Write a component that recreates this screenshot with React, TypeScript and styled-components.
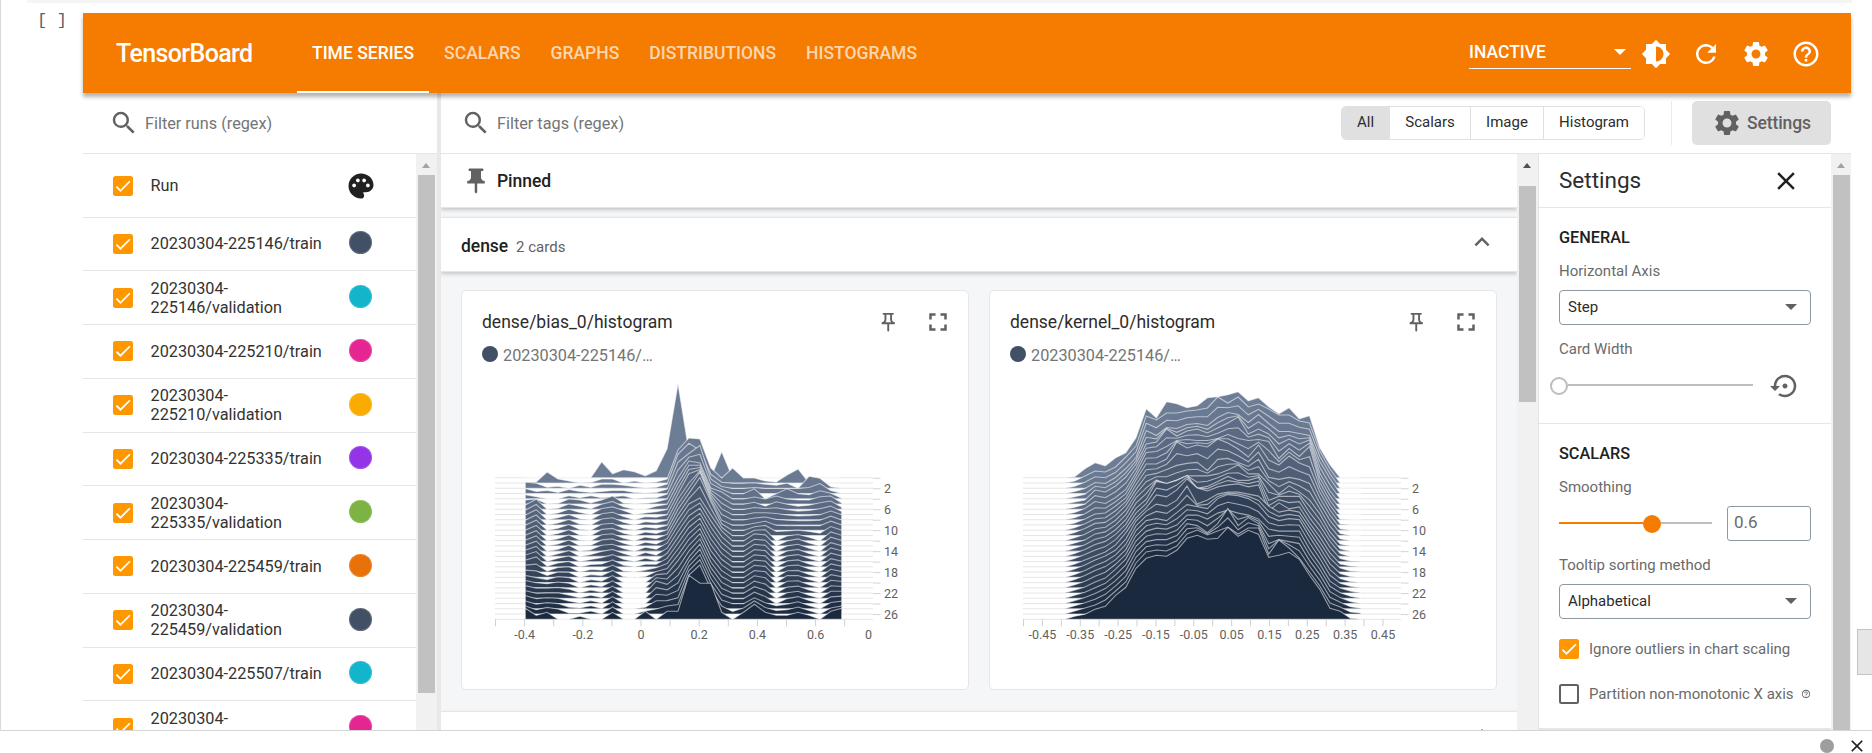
import React from "react";
import styled, { createGlobalStyle } from "styled-components";
import {
  MdBrightness6,
  MdClose,
  MdExpandLess,
  MdFullscreen,
  MdHelpOutline,
  MdOutlinePushPin,
  MdPalette,
  MdPushPin,
  MdRefresh,
  MdSearch,
  MdSettings,
  MdSettingsBackupRestore,
} from "react-icons/md";

const GlobalStyle = createGlobalStyle`
  * { box-sizing: border-box; }
  body { margin: 0; background: #fff; font-family: Roboto, "Liberation Sans", sans-serif; color: #212121; }
  svg { display: block; flex: none; }
`;

/* ---------- notebook frame ---------- */

const Page = styled.div`
  width: 1872px;
  height: 753px;
  display: flex;
  flex-direction: column;
  overflow: hidden;
  background: #fff;
`;

const Cell = styled.div`
  position: relative;
  flex: none;
  height: 731px;
  display: flex;
  flex-direction: column;
  overflow: hidden;
  border-left: 1px solid #dadada;
  border-bottom: 1px solid #d5d5d5;
`;

const PreviousCell = styled.div`
  flex: none;
  height: 3px;
  margin: 0 20px 0 26px;
  background: #f5f5f5;
`;

const CellRow = styled.div`
  flex: 1;
  min-height: 0;
  display: flex;
`;

const Gutter = styled.div`
  width: 82px;
  padding: 8px 0 0 36px;
  font: 17px/20px "Liberation Mono", monospace;
  letter-spacing: -0.3px;
  color: #616161;
  white-space: pre;
`;

const Board = styled.div`
  width: 1768px;
  padding-top: 10px;
  display: flex;
  flex-direction: column;
`;

const OuterThumb = styled.div`
  position: absolute;
  right: 0;
  top: 629px;
  width: 15px;
  height: 46px;
  background: #e6e6e6;
  border: 1px solid #c4c4c4;
  border-right: 0;
`;

const Footer = styled.div`
  flex: none;
  display: flex;
  align-items: center;
  justify-content: flex-end;
  height: 30px;
  padding-right: 5px;
`;

const StatusDot = styled.span`
  width: 14px;
  height: 14px;
  margin-right: 13px;
  border-radius: 50%;
  background: #9e9e9e;
`;

/* ---------- header ---------- */

const Header = styled.header`
  position: relative;
  z-index: 2;
  flex: none;
  height: 80px;
  display: flex;
  align-items: center;
  padding: 0 30px 0 33px;
  background: #f57c00;
  color: #fff;
  box-shadow: 0 4px 4px rgba(0, 0, 0, 0.3);
`;

const Brand = styled.h1`
  width: 181px;
  margin: 0;
  font-size: 25px;
  font-weight: 500;
  letter-spacing: -0.63px;
`;

const Tabs = styled.nav`
  display: flex;
  height: 80px;
`;

const Tab = styled.a<{ $active?: boolean }>`
  display: flex;
  align-items: center;
  padding: 0 15px;
  font-size: 17.5px;
  font-weight: 500;
  letter-spacing: 0;
  color: ${(p) => (p.$active ? "#fff" : "rgba(255,255,255,0.7)")};
  border-top: 2px solid transparent;
  border-bottom: 2px solid ${(p) => (p.$active ? "#fff" : "transparent")};
`;

const StatusSelect = styled.div`
  display: flex;
  align-items: center;
  justify-content: space-between;
  width: 162px;
  height: 33px;
  margin: -1px 10px 0 auto;
  padding-right: 5px;
  border-bottom: 1px solid #fff;
  font-size: 17.5px;
  font-weight: 500;
`;

const HeaderIcons = styled.div`
  display: flex;
  gap: 20px;
  padding-top: 1px;
`;

const Triangle = styled.i<{ $color: string }>`
  width: 0;
  height: 0;
  border: 6px solid transparent;
  border-top-color: ${(p) => p.$color};
  border-bottom-width: 0;
`;

/* ---------- shared ---------- */

const Body = styled.div`
  flex: 1;
  min-height: 0;
  display: flex;
`;

const SearchRow = styled.div<{ $pad: number }>`
  flex: none;
  height: 61px;
  display: flex;
  align-items: center;
  padding: 0 20px 1px ${(p) => p.$pad}px;
  border-bottom: 1px solid #e5e5e5;
  color: #616161;
`;

const Placeholder = styled.span<{ $gap?: number }>`
  margin: 2px auto 0 ${(p) => p.$gap ?? 7}px;
  font-size: 16.25px;
  color: #757575;
`;

const Columns = styled.div`
  flex: 1;
  min-height: 0;
  display: flex;
`;

const Track = styled.div<{ $width: number }>`
  flex: none;
  width: ${(p) => p.$width}px;
  padding: 9px 2px 0;
  background: #f1f1f1;
`;

const ScrollArrow = styled.i<{ $dark?: boolean }>`
  display: block;
  width: 0;
  margin-left: 4px;
  border: 4.5px solid transparent;
  border-top-width: 0;
  border-bottom: 5px solid ${(p) => (p.$dark ? "#505050" : "#a3a3a3")};
`;

const Thumb = styled.div<{ $top: number; $height: number }>`
  width: 17px;
  height: ${(p) => p.$height}px;
  margin-top: ${(p) => p.$top}px;
  background: #c1c1c1;
`;

const Check = styled.span<{ $on?: boolean }>`
  flex: none;
  display: flex;
  align-items: center;
  justify-content: center;
  width: 20px;
  height: 20px;
  border-radius: 2.5px;
  background: ${(p) => (p.$on ? "#ff9800" : "#fff")};
  border: ${(p) => (p.$on ? "0" : "2.5px solid #616161")};
`;

const Checkbox = ({ on = true }: { on?: boolean }) => (
  <Check $on={on}>
    {on && (
      <svg width="20" height="20" viewBox="0 0 24 24">
        <path d="M4.1 12.7 9 17.6 20.3 6.3" fill="none" stroke="#fff" strokeWidth="2.1" />
      </svg>
    )}
  </Check>
);

/* ---------- runs sidebar ---------- */

const Sidebar = styled.aside`
  width: 354px;
  display: flex;
  flex-direction: column;
`;

const RunList = styled.div`
  width: 333px;
  overflow: hidden;
`;

const RunRow = styled.div<{ $head?: boolean }>`
  display: flex;
  align-items: center;
  height: ${(p) => (p.$head ? 63.6 : 53.75)}px;
  padding: ${(p) => (p.$head ? "1px 40px 0 30px" : "0 43px 0 30px")};
  border-bottom: 1px solid #e6e6e6;
`;

const RunName = styled.span`
  flex: 1;
  margin: 0 0 0 17.5px;
  font-size: 16.25px;
  line-height: 19px;
  color: #333;
  white-space: nowrap;
`;

const RunDot = styled.span<{ $color: string }>`
  width: 23px;
  height: 23px;
  margin: -2px 1px 0 0;
  border-radius: 50%;
  background: ${(p) => p.$color};
  box-shadow: inset 0 0 0 1px rgba(255, 255, 255, 0.15);
`;

const Divider = styled.div`
  flex: none;
  width: 4px;
  background: #e8e8e8;
`;

/* ---------- main area ---------- */

const Main = styled.main`
  flex: 1;
  min-width: 0;
  display: flex;
  flex-direction: column;
`;

const Filters = styled.div`
  display: flex;
  height: 34px;
  border: 1px solid #e0e0e0;
  border-radius: 5px;
  overflow: hidden;
`;

const FilterButton = styled.span<{ $active?: boolean; $w: number }>`
  width: ${(p) => p.$w}px;
  display: flex;
  align-items: center;
  justify-content: center;
  padding-bottom: 2px;
  font-size: 15px;
  color: #2c2c2c;
  background: ${(p) => (p.$active ? "#e0e0e0" : "#fff")};
  & + & {
    border-left: 1px solid #e0e0e0;
  }
`;

const SettingsSlot = styled.div`
  margin-left: 26px;
  padding-left: 20px;
  border-left: 1px solid #ebebeb;
`;

const SettingsButton = styled.div`
  display: flex;
  align-items: center;
  gap: 5px;
  width: 139px;
  height: 44px;
  padding-left: 20px;
  border-radius: 5px;
  background: #e0e0e0;
  font-size: 17.5px;
  font-weight: 500;
  letter-spacing: -0.1px;
`;

const Cards = styled.div`
  width: 1076px;
  background: #f5f6f8;
  overflow: hidden;
`;

const GroupBar = styled.div<{ $h: number; $first?: boolean }>`
  display: flex;
  align-items: center;
  height: ${(p) => p.$h}px;
  margin-bottom: ${(p) => (p.$first ? 9 : 0)}px;
  padding: 0 20px;
  background: #fff;
  border: solid #e3e5e8;
  border-width: ${(p) => (p.$first ? 0 : 1)}px 0 1px;
  box-shadow: 0 2px 4px rgba(0, 0, 0, 0.2);
`;

const GroupName = styled.span<{ $ml?: number; $mt?: number }>`
  margin: ${(p) => p.$mt ?? 2}px 0 0 ${(p) => p.$ml ?? 0}px;
  font-size: 17.5px;
  font-weight: 500;
  letter-spacing: -0.05px;
`;

const Count = styled.span`
  flex: 1;
  margin: 4px 0 0 8px;
  font-size: 15px;
  color: #616161;
`;

const ChevronSlot = styled.span`
  margin-top: -6px;
`;

const CardRow = styled.div`
  display: flex;
  gap: 20px;
  padding: 18px 20px 21px;
`;

const Card = styled.section`
  width: 508px;
  height: 400px;
  padding: 18px 15px 0 20px;
  background: #fff;
  border: 1px solid #e4e6e9;
  border-radius: 5px;
`;

const CardHead = styled.div`
  display: flex;
  align-items: center;
  height: 26px;
  color: #616161;
`;

const CardTitle = styled.span`
  flex: 1;
  font-size: 17.5px;
  color: #2c2c2c;
`;

const PinSlot = styled.span`
  margin-right: 24px;
`;

const Legend = styled.div`
  display: flex;
  align-items: center;
  gap: 5px;
  height: 20px;
  margin: 10px 0 5px;
  font-size: 16.25px;
  color: #757575;
`;

const LegendDot = styled.span`
  width: 16px;
  height: 16px;
  margin-top: -2px;
  border-radius: 50%;
  background: #425066;
`;

const AxisText = styled.text`
  font-size: 12.5px;
  fill: #616161;
`;

/* ---------- settings panel ---------- */

const Panel = styled.aside`
  width: 293px;
  border-left: 1px solid #e6e6e6;
  border-bottom: 1px solid #e6e6e6;
`;

const PanelHead = styled.div`
  display: flex;
  align-items: center;
  justify-content: space-between;
  height: 54px;
  padding: 1px 30px 0 20px;
  border-bottom: 1px solid #e6e6e6;
  font-size: 22.5px;
`;

const PanelTitle = styled.span`
  margin-top: -2px;
  color: #2c2c2c;
`;

const Section = styled.div<{ $h: number }>`
  height: ${(p) => p.$h}px;
  padding: 20px 20px 0;
  border-bottom: 1px solid #e6e6e6;
`;

const SectionTitle = styled.h3`
  margin: 0 0 14px;
  font-size: 16.25px;
  line-height: 20px;
  font-weight: 500;
`;

const Label = styled.div<{ $tight?: boolean }>`
  font-size: 15px;
  line-height: 18px;
  letter-spacing: ${(p) => (p.$tight ? "-0.03px" : "0")};
  color: #6a6a6a;
`;

const Select = styled.div`
  display: flex;
  align-items: center;
  justify-content: space-between;
  height: 35px;
  margin: 10px 0 15px;
  padding: 0 13px 2px 8px;
  border: 1px solid #8e98a3;
  border-radius: 4px;
  font-size: 15px;
  color: #2c2c2c;
`;

const SliderRow = styled.div`
  display: flex;
  align-items: center;
  height: 35px;
  margin: 10px 0 15px;
`;

const Slider = styled.div<{ $w: number }>`
  width: ${(p) => p.$w}px;
  height: 18px;
  display: flex;
  align-items: center;
`;

const Rail = styled.span<{ $w?: number; $on?: boolean }>`
  height: 2px;
  margin-top: -1px;
  flex: ${(p) => (p.$w === undefined ? "1" : `0 0 ${p.$w}px`)};
  background: ${(p) => (p.$on ? "#f57c00" : "#bdbdbd")};
`;

const Knob = styled.span<{ $empty?: boolean }>`
  flex: none;
  width: 18px;
  height: 18px;
  margin-left: ${(p) => (p.$empty ? "-9px" : "0")};
  border-radius: 50%;
  background: ${(p) => (p.$empty ? "#fff" : "#f57c00")};
  border: ${(p) => (p.$empty ? "2.5px solid #bdbdbd" : "0")};
`;

const RestoreSlot = styled.span`
  margin-left: 17px;
  color: #616161;
`;

const NumberBox = styled.div`
  width: 84px;
  height: 35px;
  margin-left: 15px;
  padding: 5px 0 0 6px;
  border: 1px solid #8e98a3;
  border-radius: 3px;
  font-size: 17px;
  line-height: 21px;
  color: #6a6a6a;
`;

const CheckRow = styled.div`
  display: flex;
  align-items: center;
  gap: 10px;
  height: 20px;
  margin: 20px 0 25px;
  color: #616161;
  white-space: nowrap;
`;

const HintIcon = styled.span`
  margin-left: -3px;
`;

/* ---------- histogram charts ---------- */

type Keys = [number, number][];

const SLICES = 28;
const STEP = 5.24;
const BASE = 107.8;

const sample = (keys: Keys, k: number) => {
  if (k <= keys[0][0]) return keys[0][1];
  for (let j = 1; j < keys.length; j++) {
    const [k1, v1] = keys[j];
    const [k0, v0] = keys[j - 1];
    if (k <= k1) return v0 + ((v1 - v0) * (k - k0)) / (k1 - k0);
  }
  return keys[keys.length - 1][1];
};

/* one list per bin: [slice, height] stops, interpolated between slices */
const biasBins: Keys[] = [
  [[0, 0], [1, 1], [2, 6], [4, 4], [5, 4], [10, 5], [18, 7], [26, 8], [27, 11]],
  [[0, 0], [1, 1], [2, 5], [3, 2], [4, 2], [5, 5], [6, 10], [17, 10], [18, 8], [20, 5], [24, 5], [27, 4]],
  [[0, 0], [1, 11], [2, 1], [3, 3], [4, 0], [15, 0], [18, 1], [22, 5], [27, 7]],
  [[0, 0], [1, 4], [2, 2], [4, 0], [8, 2], [14, 2], [20, 6], [26, 5], [27, 0]],
  [[0, 0], [1, 2], [2, 0], [3, 4], [4, 3], [5, 5], [14, 6], [20, 5], [22, 4], [26, 1], [27, 0]],
  [[0, 0], [1, 0], [2, 3], [3, 2], [4, 1], [5, 4], [8, 1], [14, 0], [20, 0], [26, 1], [27, 3]],
  [[0, 0], [2, 1], [3, 1], [4, 3], [5, 1], [7, 0], [12, 0], [15, 2], [20, 3], [26, 3], [27, 0]],
  [[0, 16], [1, 4], [2, 4], [3, 2], [4, 1], [5, 4], [7, 6], [14, 6], [16, 4], [18, 2], [22, 1], [27, 0]],
  [[0, 4], [1, 4], [2, 4], [3, 3], [4, 2], [5, 8], [10, 7], [15, 7], [27, 7]],
  [[0, 8], [1, 0], [2, 3], [4, 3], [5, 1], [7, 4], [10, 2], [15, 3], [20, 0], [27, 0]],
  [[0, 6], [1, 2], [3, 1], [4, 0], [27, 0]],
  [[0, 2], [1, 0], [4, 1], [6, 0], [8, 3], [15, 4], [18, 2], [20, 0], [24, 0], [26, 3], [27, 8]],
  [[0, 7], [1, 1], [4, 1], [6, 3], [10, 2], [14, 2], [16, 1], [19, 6], [22, 12], [25, 8], [26, 5], [27, 0]],
  [[0, 29], [1, 4], [5, 5], [10, 5], [14, 8], [20, 9], [26, 8], [27, 8]],
  [[0, 94], [1, 33], [2, 34], [5, 26], [13, 26], [20, 22], [25, 11], [27, 8]],
  [[0, 26], [1, 45], [2, 45], [3, 40], [5, 43], [8, 46], [9, 42], [13, 42], [22, 36], [26, 39], [27, 44]],
  [[0, 0], [1, 44], [2, 38], [3, 48], [5, 41], [8, 50], [10, 58], [11, 58], [12, 54], [13, 48], [22, 49], [26, 49], [27, 36]],
  [[0, 0], [1, 15], [2, 14], [5, 16], [9, 28], [11, 34], [13, 31], [20, 26], [26, 25], [27, 36]],
  [[0, 26], [1, 5], [3, 7], [5, 12], [10, 10], [13, 15], [20, 12], [26, 8], [27, 7]],
  [[0, 0], [1, 15], [2, 5], [5, 5], [15, 5], [25, 5], [27, 0]],
  [[0, 0], [1, 5], [3, 5], [13, 5], [25, 5], [27, 7]],
  [[0, 0], [1, 5], [3, 6], [4, 10], [5, 7], [10, 7], [13, 12], [20, 12], [22, 12], [25, 11], [27, 15]],
  [[0, 0], [1, 2], [2, 4], [3, 5], [4, 0], [5, 5], [6, 3], [7, 6], [12, 11], [20, 11], [25, 6], [27, 7]],
  [[0, 0], [1, 1], [2, 3], [3, 5], [4, 5], [5, 8], [10, 5], [11, 4], [12, 0], [24, 0], [25, 3], [27, 4]],
  [[0, 0], [1, 8], [2, 5], [3, 5], [4, 10], [5, 5], [11, 4.5], [17, 6], [20, 7], [24, 5], [27, 4]],
  [[0, 0], [1, 14], [2, 0], [3, 5], [4, 5], [6, 3], [10, 4.5], [13, 7], [20, 7], [27, 7]],
  [[0, 0], [1, 0], [2, 12], [3, 6], [4, 4], [7, 4], [10, 4.5], [13, 3], [24, 3], [27, 4]],
  [[0, 0], [1, 0], [2, 10], [3, 10], [4, 8], [8, 5], [10, 4.5], [12, 0], [27, 0]],
  [[0, 0], [1, 0], [3, 3], [5, 8], [10, 9], [20, 8], [26, 6], [27, 8]],
  [[0, 0], [3, 0], [5, 1], [7, 3], [8, 5], [20, 6], [26, 8], [27, 11]],
];

/* whole curves at chosen slices, interpolated between */
const kernelRows: [number, number[]][] = [
  [0, [0, 1, 9, 15, 12, 20, 25, 40, 69, 60, 76, 74, 70, 72, 80, 81, 83, 86, 77, 80, 71, 64, 70, 59, 62, 30, 13, 0, 0, 0]],
  [1, [0, 2, 7, 12, 11, 16, 26, 37, 67, 63, 70, 70, 72, 73, 75, 86, 80, 86, 76, 79, 74, 68, 68, 62, 60, 32, 14, 0, 0, 0]],
  [3, [0, 2, 5, 11, 10, 16, 25, 36, 63, 58, 66, 65, 69, 70, 68, 76, 81, 79, 71, 79, 70, 62, 62, 60, 58, 32, 15, 0, 0, 0]],
  [5, [0, 2, 4, 14, 12, 18, 27, 40, 60, 62, 75, 68, 73, 75, 71, 76, 81, 87, 70, 75, 70, 60, 65, 60, 64, 31, 13, 0, 0, 0]],
  [7, [0, 2, 6, 13, 11, 17, 25, 42, 62, 63, 68, 74, 75, 74, 74, 76, 80, 76, 74, 75, 73, 56, 66, 58, 68, 32, 14, 0, 0, 0]],
  [9, [0, 2, 6, 11, 12, 19, 27, 45, 61, 61, 66, 83, 77, 80, 78, 86, 82, 76, 68, 80, 65, 60, 69, 62, 58, 33, 15, 1, 0, 0]],
  [11, [0, 3, 7, 12, 13, 20, 30, 46, 60, 62, 66, 70, 72, 73, 65, 76, 77, 73, 69, 76, 58, 56, 58, 56, 52, 32, 15, 2, 0, 0]],
  [13, [0, 3, 6, 12, 14, 21, 31, 48, 58, 66, 62, 66, 70, 70, 70, 72, 76, 81, 72, 72, 62, 52, 60, 54, 46, 32, 14, 2, 0, 0]],
  [15, [0, 3, 7, 12, 15, 22, 32, 48, 57, 75, 73, 76, 81, 68, 70, 75, 80, 76, 76, 79, 56, 60, 60, 60, 44, 31, 15, 3, 0, 0]],
  [17, [0, 3, 7, 11, 15, 22, 34, 49, 59, 72, 70, 77, 88, 79, 76, 80, 82, 83, 80, 82, 56, 64, 58, 60, 44, 30, 14, 3, 1, 0]],
  [18, [0, 3, 7, 12, 16, 22, 33, 51, 61, 68, 66, 72, 86, 68, 72, 78, 80, 80, 78, 76, 66, 60, 62, 60, 45, 30, 14, 4, 1, 0]],
  [20, [0, 3, 7, 12, 16, 23, 33, 52, 62, 64, 62, 70, 78, 76, 74, 84, 88, 87, 84, 78, 66, 62, 64, 63, 46, 30, 13, 4, 1, 0]],
  [22, [0, 3, 6, 11, 15, 24, 34, 52, 62, 65, 64, 68, 78, 78, 74, 80, 83, 80, 78, 74, 64, 62, 62, 62, 44, 29, 12, 5, 2, 0]],
  [24, [0, 3, 6, 10, 15, 23, 33, 52, 62, 64, 64, 68, 80, 78, 71, 80, 95, 78, 86, 80, 60, 64, 62, 60, 43, 29, 12, 6, 2, 0]],
  [26, [0, 3, 6, 9, 14, 23, 32, 51, 62, 64, 63, 68, 80, 84, 79, 83, 87, 80, 86, 86, 60, 74, 66, 56, 42, 28, 11, 7, 2, 1]],
  [27, [0, 3, 5, 10, 13, 24, 32, 51, 61, 64, 63, 69, 81, 84, 80, 81, 92, 83, 89, 85, 62, 64, 67, 60, 44, 30, 11, 8, 1, 0]],
];

const kernelBins: Keys[] = kernelRows[0][1].map((_, i) => kernelRows.map(([k, row]): [number, number] => [k, row[i]]));

const LIGHT = [110, 125, 150];
const DARK = [26, 41, 62];
const shade = (k: number) => {
  const t = k / (SLICES - 1);
  return `rgb(${LIGHT.map((c, i) => Math.round(c + (DARK[i] - c) * t)).join(",")})`;
};

interface ChartProps {
  id: string;
  bins: Keys[];
  x0: number;
  dx: number;
  tick0: number;
  tickStep: number;
  ticks: string[];
}

const Histogram = ({ id, bins, x0, dx, tick0, tickStep, ticks }: ChartProps) => {
  const left = 13;
  const right = 391;
  const bottom = BASE + STEP * (SLICES - 1);
  const slices = Array.from({ length: SLICES }, (_, k) => k);
  return (
    <svg width="430" height="290" viewBox="0 0 430 290">
      <clipPath id={id}>
        <rect x="0" y="0" width={right} height="290" />
      </clipPath>
      {slices.map((k) => {
        const y = BASE + STEP * k;
        const curve = bins.map((b, i) => `${(x0 + dx * i).toFixed(1)},${(y - sample(b, k)).toFixed(1)}`).join("L");
        return (
          <g key={k}>
            <path d={`M${left},${y}H${right}`} stroke="#e6e6e6" strokeWidth="1" />
            <path
              d={`M${x0},${y}L${curve}L${x0 + dx * 29},${y}Z`}
              fill={shade(k)}
              stroke="#fff"
              strokeOpacity="0.55"
              strokeWidth="1.1"
            />
          </g>
        );
      })}
      {slices
        .filter((k) => k % 2 === 0)
        .map((k) => (
          <g key={k}>
            <path d={`M${right},${BASE + 0.5 + STEP * k}h7.5`} stroke="#d4d4d4" />
            {k % 4 === 2 && (
              <AxisText x={right + 11} y={BASE + 5 + STEP * k}>
                {k}
              </AxisText>
            )}
          </g>
        ))}
      <g clipPath={`url(#${id})`}>
        {ticks.map((t, i) => (
          <g key={i}>
            <path d={`M${tick0 + tickStep * i},${bottom}v7`} stroke="#d0d0d0" />
            <AxisText x={tick0 + tickStep * i} y={bottom + 20} textAnchor="middle">
              {t}
            </AxisText>
          </g>
        ))}
      </g>
    </svg>
  );
};

const HistogramCard = ({ title, chart }: { title: string; chart: ChartProps }) => (
  <Card>
    <CardHead>
      <CardTitle>{title}</CardTitle>
      <PinSlot>
        <MdOutlinePushPin size={22.5} />
      </PinSlot>
      <MdFullscreen size={30} />
    </CardHead>
    <Legend>
      <LegendDot />
      20230304-225146/…
    </Legend>
    <Histogram {...chart} />
  </Card>
);

/* ---------- data ---------- */

const runs: [string[], string][] = [
  [["20230304-225146/train"], "#425066"],
  [["20230304-", "225146/validation"], "#12b5cb"],
  [["20230304-225210/train"], "#e52592"],
  [["20230304-", "225210/validation"], "#f9ab00"],
  [["20230304-225335/train"], "#9334e6"],
  [["20230304-", "225335/validation"], "#7cb342"],
  [["20230304-225459/train"], "#e8710a"],
  [["20230304-", "225459/validation"], "#425066"],
  [["20230304-225507/train"], "#12b5cb"],
  [["20230304-", "225507/validation"], "#e52592"],
];

const biasTicks = ["", "-0.4", "", "-0.2", "", "0", "", "0.2", "", "0.4", "", "0.6", "", "0.8"];
const kernelTicks = [
  "", "-0.45", "", "-0.35", "", "-0.25", "", "-0.15", "", "-0.05", "",
  "0.05", "", "0.15", "", "0.25", "", "0.35", "", "0.45",
];

export default function App() {
  return (
    <Page>
      <GlobalStyle />
      <Cell>
        <PreviousCell />
        <CellRow>
          <Gutter>[ ]</Gutter>
          <Board>
            <Header>
              <Brand>TensorBoard</Brand>
              <Tabs>
                <Tab $active>TIME SERIES</Tab>
                <Tab>SCALARS</Tab>
                <Tab>GRAPHS</Tab>
                <Tab>DISTRIBUTIONS</Tab>
                <Tab>HISTOGRAMS</Tab>
              </Tabs>
              <StatusSelect>
                INACTIVE
                <Triangle $color="#fff" />
              </StatusSelect>
              <HeaderIcons>
                <MdBrightness6 size={30} />
                <MdRefresh size={30} />
                <MdSettings size={30} />
                <MdHelpOutline size={30} />
              </HeaderIcons>
            </Header>
            <Body>
              <Sidebar>
                <SearchRow $pad={26}>
                  <MdSearch size={30} />
                  <Placeholder $gap={6}>Filter runs (regex)</Placeholder>
                </SearchRow>
                <Columns>
                  <RunList>
                    <RunRow $head>
                      <Checkbox />
                      <RunName>Run</RunName>
                      <MdPalette size={30} />
                    </RunRow>
                    {runs.map(([lines, color]) => (
                      <RunRow key={lines.join("")}>
                        <Checkbox />
                        <RunName>
                          {lines.map((l) => (
                            <div key={l}>{l}</div>
                          ))}
                        </RunName>
                        <RunDot $color={color} />
                      </RunRow>
                    ))}
                  </RunList>
                  <Track $width={21}>
                    <ScrollArrow />
                    <Thumb $top={7} $height={518} />
                  </Track>
                </Columns>
              </Sidebar>
              <Divider />
              <Main>
                <SearchRow $pad={20}>
                  <MdSearch size={30} />
                  <Placeholder $gap={6}>Filter tags (regex)</Placeholder>
                  <Filters>
                    <FilterButton $active $w={47}>All</FilterButton>
                    <FilterButton $w={81}>Scalars</FilterButton>
                    <FilterButton $w={73}>Image</FilterButton>
                    <FilterButton $w={101}>Histogram</FilterButton>
                  </Filters>
                  <SettingsSlot>
                    <SettingsButton>
                      <MdSettings size={30} />
                      Settings
                    </SettingsButton>
                  </SettingsSlot>
                </SearchRow>
                <Columns>
                  <Cards>
                    <GroupBar $h={54} $first>
                      <MdPushPin size={30} color="#616161" />
                      <GroupName $ml={6} $mt={0}>Pinned</GroupName>
                    </GroupBar>
                    <GroupBar $h={55}>
                      <GroupName>dense</GroupName>
                      <Count>2 cards</Count>
                      <ChevronSlot>
                        <MdExpandLess size={30} color="#616161" />
                      </ChevronSlot>
                    </GroupBar>
                    <CardRow>
                      <HistogramCard
                        title="dense/bias_0/histogram"
                        chart={{ id: "bias", bins: biasBins, x0: 43.3, dx: 10.91, tick0: 13.5, tickStep: 29.1, ticks: biasTicks }}
                      />
                      <HistogramCard
                        title="dense/kernel_0/histogram"
                        chart={{ id: "kernel", bins: kernelBins, x0: 54.5, dx: 10.21, tick0: 13.5, tickStep: 18.92, ticks: kernelTicks }}
                      />
                    </CardRow>
                    <GroupBar $h={51}>
                      <GroupName>dense_1</GroupName>
                      <Count>2 cards</Count>
                      <ChevronSlot>
                        <MdExpandLess size={30} color="#616161" />
                      </ChevronSlot>
                    </GroupBar>
                  </Cards>
                  <Track $width={21}>
                    <ScrollArrow $dark />
                    <Thumb $top={18} $height={216} />
                  </Track>
                  <Panel>
                    <PanelHead>
                      <PanelTitle>Settings</PanelTitle>
                      <MdClose size={30} />
                    </PanelHead>
                    <Section $h={216}>
                      <SectionTitle>GENERAL</SectionTitle>
                      <Label>Horizontal Axis</Label>
                      <Select>
                        Step
                        <Triangle $color="#616161" />
                      </Select>
                      <Label>Card Width</Label>
                      <SliderRow>
                        <Slider $w={194}>
                          <Knob $empty />
                          <Rail />
                        </Slider>
                        <RestoreSlot>
                          <MdSettingsBackupRestore size={30} />
                        </RestoreSlot>
                      </SliderRow>
                    </Section>
                    <Section $h={305}>
                      <SectionTitle>SCALARS</SectionTitle>
                      <Label>Smoothing</Label>
                      <SliderRow>
                        <Slider $w={153}>
                          <Rail $w={84} $on />
                          <Knob />
                          <Rail />
                        </Slider>
                        <NumberBox>0.6</NumberBox>
                      </SliderRow>
                      <Label>Tooltip sorting method</Label>
                      <Select>
                        Alphabetical
                        <Triangle $color="#616161" />
                      </Select>
                      <CheckRow>
                        <Checkbox />
                        <Label>Ignore outliers in chart scaling</Label>
                      </CheckRow>
                      <CheckRow>
                        <Checkbox on={false} />
                        <Label $tight>Partition non-monotonic X axis</Label>
                        <HintIcon>
                          <MdHelpOutline size={10} />
                        </HintIcon>
                      </CheckRow>
                    </Section>
                  </Panel>
                  <Track $width={20}>
                    <ScrollArrow />
                    <Thumb $top={7} $height={560} />
                  </Track>
                </Columns>
              </Main>
            </Body>
          </Board>
        </CellRow>
        <OuterThumb />
      </Cell>
      <Footer>
        <StatusDot />
        <MdClose size={20} color="#212121" />
      </Footer>
    </Page>
  );
}
